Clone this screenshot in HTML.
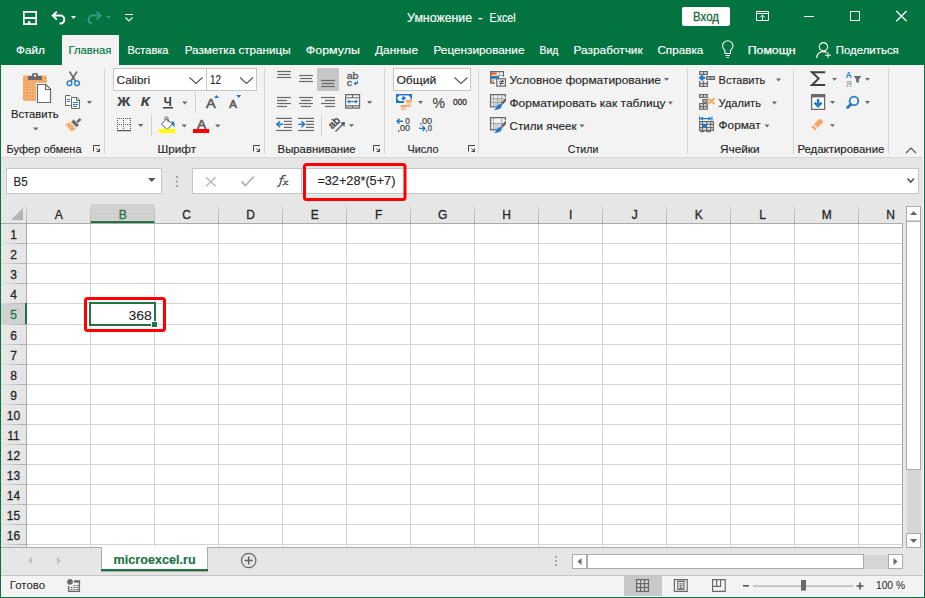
<!DOCTYPE html>
<html><head><meta charset="utf-8"><style>
html,body{margin:0;padding:0;background:#F3F3F3;}
svg{display:block;font-family:"Liberation Sans",sans-serif;}
</style></head><body>
<svg width="925" height="598" viewBox="0 0 925 598">
<rect x="0" y="0" width="925" height="65" fill="#03733F" />
<rect x="0" y="65" width="925" height="92" fill="#F3F3F3" />
<rect x="0" y="157" width="925" height="1" fill="#D6D6D6" />
<rect x="0" y="158" width="925" height="46" fill="#E6E6E6" />
<text x="407.1" y="22" font-size="12" fill="#FFFFFF" font-weight="normal" text-anchor="start" textLength="65" lengthAdjust="spacingAndGlyphs" stroke="#FFFFFF" stroke-width="0.15" >Умножение</text>
<text x="477.9" y="22" font-size="12" fill="#FFFFFF" font-weight="normal" text-anchor="start" textLength="4.6" lengthAdjust="spacingAndGlyphs" stroke="#FFFFFF" stroke-width="0.15" >-</text>
<text x="489.6" y="22" font-size="12" fill="#FFFFFF" font-weight="normal" text-anchor="start" textLength="26" lengthAdjust="spacingAndGlyphs" stroke="#FFFFFF" stroke-width="0.15" >Excel</text>
<rect x="682" y="7" width="48" height="19" rx="2" fill="#FFFFFF"/>
<text x="706" y="21" font-size="12" fill="#1D6B3F" font-weight="normal" text-anchor="middle" textLength="26" lengthAdjust="spacingAndGlyphs" stroke="#1D6B3F" stroke-width="0.3" >Вход</text>
<path fill="#FFFFFF" fill-rule="evenodd" d="M23 11H37V25H23Z M24.7 12.7H35.3V17H24.7Z M24.7 19H35.3V23.3H24.7Z M28 21.3H30.3V23.3H28Z"/>
<path fill="none" stroke="#FFFFFF" stroke-width="2" d="M56.8 11.6L52.8 15.6L56.8 19.6 M53.2 15.6H60.3A4 4 0 0 1 60.3 23.6H59.5"/>
<path fill="#FFFFFF" d="M71 16H76L73.5 19Z"/>
<path fill="none" stroke="#2E9E7C" stroke-width="2" d="M96.6 11.6L100.6 15.6L96.6 19.6 M100.2 15.6H92.6A4 4 0 0 0 88.6 19.6A4 4 0 0 0 92.2 23.6"/>
<path fill="#2E9A78" d="M106 16H111L108.5 19Z"/>
<path fill="none" stroke="#FFFFFF" stroke-width="1.2" d="M125 14.5H133 M125.5 17.5L129 21L132.5 17.5"/>
<path fill="none" stroke="#FFFFFF" stroke-width="1" d="M756.5 11.5H768.5V20.5H756.5Z M756.5 13.5H768.5 M762.5 20V15 M760 17.5L762.5 15L765 17.5"/>
<path fill="none" stroke="#FFFFFF" stroke-width="1" d="M804 16.5H814"/>
<path fill="none" stroke="#FFFFFF" stroke-width="1" d="M850.5 11.5H859.5V20.5H850.5Z"/>
<path fill="none" stroke="#FFFFFF" stroke-width="1.3" d="M896.3 11L906.6 21.3 M906.6 11L896.3 21.3"/>
<path fill="none" stroke="#FFFFFF" stroke-width="1.1" d="M725 53.5V50.5C723.5 49 722.5 47.5 722.5 46A5.2 5.2 0 0 1 733 46C733 47.5 732 49 730.5 50.5V53.5Z M725.5 55.5H730 M726.5 57.5H729"/>
<path fill="none" stroke="#FFFFFF" stroke-width="1.1" d="M823.5 42.6A4.2 4.2 0 1 1 823.4 42.6Z M816.6 58C817 53.8 819.6 51.6 823.5 51.6C824.8 51.6 825.8 51.9 826.8 52.4"/>
<path fill="none" stroke="#FFFFFF" stroke-width="1" d="M828 52.2V58.2 M825 55.2H831"/>
<rect x="62" y="35" width="57" height="30" fill="#F3F3F3" />
<text x="16" y="54" font-size="11.6" fill="#FFFFFF" font-weight="normal" text-anchor="start" textLength="29" lengthAdjust="spacingAndGlyphs" stroke="#FFFFFF" stroke-width="0.15" >Файл</text>
<text x="68.5" y="54" font-size="11.6" fill="#03733F" font-weight="normal" text-anchor="start" textLength="43" lengthAdjust="spacingAndGlyphs" stroke="#03733F" stroke-width="0.15" >Главная</text>
<text x="127.5" y="54" font-size="11.6" fill="#FFFFFF" font-weight="normal" text-anchor="start" textLength="41" lengthAdjust="spacingAndGlyphs" stroke="#FFFFFF" stroke-width="0.15" >Вставка</text>
<text x="184.7" y="54" font-size="11.6" fill="#FFFFFF" font-weight="normal" text-anchor="start" textLength="106" lengthAdjust="spacingAndGlyphs" stroke="#FFFFFF" stroke-width="0.15" >Разметка страницы</text>
<text x="305.8" y="54" font-size="11.6" fill="#FFFFFF" font-weight="normal" text-anchor="start" textLength="54" lengthAdjust="spacingAndGlyphs" stroke="#FFFFFF" stroke-width="0.15" >Формулы</text>
<text x="375" y="54" font-size="11.6" fill="#FFFFFF" font-weight="normal" text-anchor="start" textLength="43" lengthAdjust="spacingAndGlyphs" stroke="#FFFFFF" stroke-width="0.15" >Данные</text>
<text x="433.5" y="54" font-size="11.6" fill="#FFFFFF" font-weight="normal" text-anchor="start" textLength="91" lengthAdjust="spacingAndGlyphs" stroke="#FFFFFF" stroke-width="0.15" >Рецензирование</text>
<text x="539.5" y="54" font-size="11.6" fill="#FFFFFF" font-weight="normal" text-anchor="start" textLength="19" lengthAdjust="spacingAndGlyphs" stroke="#FFFFFF" stroke-width="0.15" >Вид</text>
<text x="573.6" y="54" font-size="11.6" fill="#FFFFFF" font-weight="normal" text-anchor="start" textLength="69" lengthAdjust="spacingAndGlyphs" stroke="#FFFFFF" stroke-width="0.15" >Разработчик</text>
<text x="657.4" y="54" font-size="11.6" fill="#FFFFFF" font-weight="normal" text-anchor="start" textLength="46" lengthAdjust="spacingAndGlyphs" stroke="#FFFFFF" stroke-width="0.15" >Справка</text>
<text x="747.7" y="54" font-size="11.6" fill="#FFFFFF" font-weight="normal" text-anchor="start" textLength="48" lengthAdjust="spacingAndGlyphs" stroke="#FFFFFF" stroke-width="0.25" >Помощн</text>
<text x="835.8" y="54" font-size="11.6" fill="#FFFFFF" font-weight="normal" text-anchor="start" textLength="63" lengthAdjust="spacingAndGlyphs" stroke="#FFFFFF" stroke-width="0.15" >Поделиться</text>
<rect x="104" y="69" width="1" height="85" fill="#D5D5D5" />
<rect x="264" y="69" width="1" height="85" fill="#D5D5D5" />
<rect x="384" y="69" width="1" height="85" fill="#D5D5D5" />
<rect x="478" y="69" width="1" height="85" fill="#D5D5D5" />
<rect x="687" y="69" width="1" height="85" fill="#D5D5D5" />
<rect x="793" y="69" width="1" height="85" fill="#D5D5D5" />
<rect x="888" y="69" width="1" height="85" fill="#D5D5D5" />
<text x="6.6" y="153" font-size="11.6" fill="#262626" font-weight="normal" text-anchor="start" textLength="75" lengthAdjust="spacingAndGlyphs" stroke="#262626" stroke-width="0.15" >Буфер обмена</text>
<text x="157.6" y="153" font-size="11.6" fill="#262626" font-weight="normal" text-anchor="start" textLength="38.5" lengthAdjust="spacingAndGlyphs" stroke="#262626" stroke-width="0.15" >Шрифт</text>
<text x="277.6" y="153" font-size="11.6" fill="#262626" font-weight="normal" text-anchor="start" textLength="78" lengthAdjust="spacingAndGlyphs" stroke="#262626" stroke-width="0.15" >Выравнивание</text>
<text x="407.5" y="153" font-size="11.6" fill="#262626" font-weight="normal" text-anchor="start" textLength="31" lengthAdjust="spacingAndGlyphs" stroke="#262626" stroke-width="0.15" >Число</text>
<text x="567.8" y="153" font-size="11.6" fill="#262626" font-weight="normal" text-anchor="start" textLength="30.5" lengthAdjust="spacingAndGlyphs" stroke="#262626" stroke-width="0.15" >Стили</text>
<text x="720" y="153" font-size="11.6" fill="#262626" font-weight="normal" text-anchor="start" textLength="39.5" lengthAdjust="spacingAndGlyphs" stroke="#262626" stroke-width="0.15" >Ячейки</text>
<text x="797.4" y="153" font-size="11.6" fill="#262626" font-weight="normal" text-anchor="start" textLength="87" lengthAdjust="spacingAndGlyphs" stroke="#262626" stroke-width="0.15" >Редактирование</text>
<defs><pattern id="dots" width="3" height="3" patternUnits="userSpaceOnUse"><rect width="3" height="3" fill="#F3A965"/><rect x="1" y="1" width="1" height="1" fill="#F9D4A8"/></pattern><pattern id="hdots" width="4" height="4" patternUnits="userSpaceOnUse"><rect width="4" height="4" fill="#D2D2D2"/><rect x="1" y="1" width="1" height="1" fill="#C4C4C4"/></pattern><linearGradient id="vgrad" x1="0" y1="0" x2="0" y2="1"><stop offset="0" stop-color="#E0E0E0"/><stop offset="1" stop-color="#A8A8A8"/></linearGradient><linearGradient id="hgrad" x1="0" y1="0" x2="1" y2="0"><stop offset="0" stop-color="#E0E0E0"/><stop offset="1" stop-color="#ABABAB"/></linearGradient><pattern id="trk" width="2" height="2" patternUnits="userSpaceOnUse"><rect width="2" height="2" fill="#DCDCDC"/><rect x="0" y="0" width="1" height="1" fill="#D0D0D0"/><rect x="1" y="1" width="1" height="1" fill="#D0D0D0"/></pattern></defs>
<rect x="23" y="75.5" width="24" height="25.5" rx="1.5" fill="url(#dots)"/>
<path fill="#6A6A6A" d="M28 76H42V80H28Z M32 76V74.5Q32 73 33.5 73H36.5Q38 73 38 74.5V76Z"/>
<rect x="34" y="74.5" width="2" height="2" fill="#F3F3F3"/>
<path fill="#FFFFFF" stroke="#F3F3F3" stroke-width="3" d="M37.5 84.5H46L50.5 89V102.5H37.5Z"/>
<path fill="#FFFFFF" stroke="#6A6A6A" stroke-width="1.2" d="M37.5 84.5H46L50.5 89V102.5H37.5Z M45.5 84.5V89.5H50.5"/>
<text x="11" y="117.7" font-size="11.6" fill="#262626" font-weight="normal" text-anchor="start" textLength="47.5" lengthAdjust="spacingAndGlyphs" stroke="#262626" stroke-width="0.15" >Вставить</text>
<path fill="#6A6A6A" d="M33 127.5H38.5L35.75 130.5Z"/>
<path fill="none" stroke="#6A6A6A" stroke-width="1.6" d="M69.5 71.5L75.5 81 M77 71.5L71 81"/>
<circle cx="69.5" cy="83.2" r="2.4" fill="none" stroke="#1F7AC8" stroke-width="1.3"/>
<circle cx="77" cy="83.2" r="2.4" fill="none" stroke="#1F7AC8" stroke-width="1.3"/>
<path fill="#FFFFFF" stroke="#6A6A6A" stroke-width="1" d="M65.5 95.5H70L72 97.5V105.5H65.5Z"/>
<path fill="none" stroke="#1F7AC8" stroke-width="1" d="M67 99.5H70 M67 101.5H70"/>
<path fill="#FFFFFF" stroke="#F3F3F3" stroke-width="2" d="M71.5 97.5H77L79.5 100V108.5H71.5Z"/>
<path fill="#FFFFFF" stroke="#6A6A6A" stroke-width="1" d="M71.5 97.5H77L79.5 100V108.5H71.5Z M76.5 97.5V100.5H79.5"/>
<path fill="none" stroke="#1F7AC8" stroke-width="1" d="M73 102.5H78 M73 104.5H78 M73 106.5H77"/>
<path fill="#6A6A6A" d="M87 101H92L89.5 104Z"/>
<path fill="#6A6A6A" d="M76.3 121.2L79.6 117.9L81.4 119.7L78.1 123Z"/>
<path fill="#6A6A6A" d="M71.2 121.9L73.6 119.5L79 124.9L76.6 127.3Z"/>
<path fill="url(#dots)" d="M65.3 124.3L69.7 122.3L75.9 128.5L71.8 131.8Z"/>
<path fill="none" stroke="#444" stroke-width="1" d="M93.5 151.5V145.5H100 M96.5 148.5L99.5 151.5 M96.5 151.5H99.5V148.5"/>
<rect x="113" y="68" width="144" height="23" fill="#C6C6C6" />
<rect x="114" y="69" width="92" height="21" fill="#FFFFFF" />
<rect x="207" y="69" width="49" height="21" fill="#FFFFFF" />
<text x="116.6" y="84" font-size="11.6" fill="#262626" font-weight="normal" text-anchor="start" textLength="33.5" lengthAdjust="spacingAndGlyphs" stroke="#262626" stroke-width="0.15" >Calibri</text>
<text x="210" y="84" font-size="12" fill="#262626" font-weight="normal" text-anchor="start" textLength="11" lengthAdjust="spacingAndGlyphs" stroke="#262626" stroke-width="0.15" >12</text>
<path fill="none" stroke="#555" stroke-width="1.1" d="M189.5 77.5L196 83.5L202.5 77.5 M240 77.5L246.5 83.5L253 77.5"/>
<text x="117.3" y="106.2" font-size="13.5" fill="#404040" font-weight="bold" text-anchor="start" textLength="13" lengthAdjust="spacingAndGlyphs" stroke="#404040" stroke-width="0.15" >Ж</text>
<text x="140.8" y="106.2" font-size="13" fill="#404040" font-weight="bold" text-anchor="start" textLength="9" lengthAdjust="spacingAndGlyphs" stroke="#404040" stroke-width="0.15" font-style="italic">К</text>
<text x="163.8" y="106.2" font-size="12.5" fill="#404040" font-weight="bold" text-anchor="start" textLength="8" lengthAdjust="spacingAndGlyphs" stroke="#404040" stroke-width="0.15" >Ч</text>
<rect x="163" y="107" width="10" height="1.5" fill="#404040" />
<path fill="#6A6A6A" d="M182 101.5H187.5L184.75 104.5Z"/>
<rect x="195" y="92" width="1" height="21" fill="#D0D0D0" />
<text x="206" y="108" font-size="13.5" fill="#5A5A5A" font-weight="normal" text-anchor="start" textLength="9.7" lengthAdjust="spacingAndGlyphs" stroke="#5A5A5A" stroke-width="0.6" >A</text>
<path fill="#1F7AC8" d="M214 98H219.2L216.6 95Z M236.2 95H241.2L238.7 98Z"/>
<text x="229.2" y="108" font-size="10.5" fill="#5A5A5A" font-weight="normal" text-anchor="start" textLength="7.6" lengthAdjust="spacingAndGlyphs" stroke="#5A5A5A" stroke-width="0.6" >A</text>
<path fill="none" stroke="#555" stroke-width="1" stroke-dasharray="1 1" d="M117 118.5H131 M117 124.5H131 M117.5 118V130 M123.5 118V130 M130.5 118V130"/>
<rect x="117" y="130" width="14" height="1.2" fill="#555" />
<path fill="#6A6A6A" d="M138 124H143.5L140.75 127Z"/>
<rect x="151" y="115" width="1" height="21" fill="#D0D0D0" />
<path fill="#FFFFFF" stroke="#555" stroke-width="1" d="M161.5 124L166.5 119L172.5 124L167 129.5Z M165 120V118Q165 117 166.5 117Q168 117 168 118V122"/>
<path fill="#1F7AC8" d="M172 121Q175.5 122 174.5 127Q173 126 172 124Z"/>
<rect x="158.8" y="129" width="16.4" height="4" fill="#FFFF00" />
<path fill="#6A6A6A" d="M181.5 124.5H187.0L184.25 127.5Z"/>
<text x="197" y="129" font-size="13.5" fill="#5A5A5A" font-weight="normal" text-anchor="start" textLength="9.2" lengthAdjust="spacingAndGlyphs" stroke="#5A5A5A" stroke-width="0.6" >A</text>
<rect x="193" y="129" width="16.2" height="4" fill="#FF0000" />
<path fill="#6A6A6A" d="M215 124.5H220.5L217.75 127.5Z"/>
<path fill="none" stroke="#444" stroke-width="1" d="M253.5 151.5V145.5H260 M256.5 148.5L259.5 151.5 M256.5 151.5H259.5V148.5"/>
<rect x="277" y="70.9" width="14" height="1.2" fill="#6A6A6A" />
<rect x="278" y="73.9" width="12" height="1.2" fill="#6A6A6A" />
<rect x="277" y="76.9" width="14" height="1.2" fill="#6A6A6A" />
<rect x="299" y="74.9" width="14" height="1.2" fill="#6A6A6A" />
<rect x="300" y="77.9" width="12" height="1.2" fill="#6A6A6A" />
<rect x="299" y="80.9" width="14" height="1.2" fill="#6A6A6A" />
<rect x="317" y="68" width="22" height="23" fill="#C6C6C6" />
<rect x="321" y="79.9" width="14" height="1.2" fill="#6A6A6A" />
<rect x="322" y="82.9" width="12" height="1.2" fill="#6A6A6A" />
<rect x="321" y="85.9" width="14" height="1.2" fill="#6A6A6A" />
<rect x="277" y="96.9" width="14" height="1.2" fill="#6A6A6A" />
<rect x="277" y="99.9" width="10" height="1.2" fill="#6A6A6A" />
<rect x="277" y="102.9" width="14" height="1.2" fill="#6A6A6A" />
<rect x="277" y="105.9" width="10" height="1.2" fill="#6A6A6A" />
<rect x="299" y="96.9" width="14" height="1.2" fill="#6A6A6A" />
<rect x="301" y="99.9" width="10" height="1.2" fill="#6A6A6A" />
<rect x="299" y="102.9" width="14" height="1.2" fill="#6A6A6A" />
<rect x="301" y="105.9" width="10" height="1.2" fill="#6A6A6A" />
<rect x="321" y="96.9" width="14" height="1.2" fill="#6A6A6A" />
<rect x="325" y="99.9" width="10" height="1.2" fill="#6A6A6A" />
<rect x="321" y="102.9" width="14" height="1.2" fill="#6A6A6A" />
<rect x="325" y="105.9" width="10" height="1.2" fill="#6A6A6A" />
<text x="346.7" y="78.6" font-size="9.5" fill="#555" font-weight="normal" text-anchor="start" textLength="11.8" lengthAdjust="spacingAndGlyphs" stroke="#555" stroke-width="0.3" >ab</text>
<text x="346.8" y="85.7" font-size="9.5" fill="#555" font-weight="normal" text-anchor="start" textLength="5.3" lengthAdjust="spacingAndGlyphs" stroke="#555" stroke-width="0.3" >c</text>
<path fill="none" stroke="#1F7AC8" stroke-width="1.1" d="M357.5 81V83.5H354.5 M356 82L354.5 83.5L356 85"/>
<path fill="none" stroke="#6A6A6A" stroke-width="1.15" d="M345.6 94.65H359.6V108.1H345.6Z M345.6 97.7H359.6 M345.6 105.8H359.6 M352.5 94.6V97.7 M352.5 105.8V108.1"/>
<path fill="none" stroke="#1F7AC8" stroke-width="1.1" d="M348 101.6H357"/>
<path fill="#1F7AC8" d="M347 101.6L349.6 99.4V103.8Z M358 101.6L355.4 99.4V103.8Z"/>
<path fill="#6A6A6A" d="M367 101H372.2L369.6 104Z"/>
<rect x="276" y="117.8" width="16" height="1.2" fill="#6A6A6A" />
<rect x="284" y="120.8" width="8" height="1.2" fill="#6A6A6A" />
<rect x="284" y="123.8" width="8" height="1.2" fill="#6A6A6A" />
<rect x="284" y="126.8" width="8" height="1.2" fill="#6A6A6A" />
<rect x="276" y="129.9" width="16" height="1.2" fill="#6A6A6A" />
<path fill="none" stroke="#1F7AC8" stroke-width="1.6" d="M277 124.3H283 M280 121.3L277 124.3L280 127.3"/>
<rect x="298" y="117.8" width="16" height="1.2" fill="#6A6A6A" />
<rect x="306" y="120.8" width="8" height="1.2" fill="#6A6A6A" />
<rect x="306" y="123.8" width="8" height="1.2" fill="#6A6A6A" />
<rect x="306" y="126.8" width="8" height="1.2" fill="#6A6A6A" />
<rect x="298" y="129.9" width="16" height="1.2" fill="#6A6A6A" />
<path fill="none" stroke="#1F7AC8" stroke-width="1.6" d="M298.5 124.3H304.5 M301.5 121.3L304.5 124.3L301.5 127.3"/>
<rect x="321" y="115" width="1" height="21" fill="#D0D0D0" />
<text x="0" y="0" font-size="10.5" fill="#444" font-weight="normal" text-anchor="start" textLength="12" lengthAdjust="spacingAndGlyphs" stroke="#444" stroke-width="0.45" transform="translate(332.3 129.6) rotate(-45)">ab</text>
<path fill="none" stroke="#555" stroke-width="1.3" d="M335.5 131.5L344 123"/>
<path fill="#555" d="M345 122L340.3 122.6L344.4 126.7Z"/>
<path fill="#6A6A6A" d="M349 124.3H354L351.5 127.0Z"/>
<path fill="none" stroke="#444" stroke-width="1" d="M373.5 151.5V145.5H380 M376.5 148.5L379.5 151.5 M376.5 151.5H379.5V148.5"/>
<rect x="393" y="68" width="78" height="23" fill="#C6C6C6" />
<rect x="394" y="69" width="76" height="21" fill="#FFFFFF" />
<text x="396.4" y="83.6" font-size="11.6" fill="#262626" font-weight="normal" text-anchor="start" textLength="40" lengthAdjust="spacingAndGlyphs" stroke="#262626" stroke-width="0.15" >Общий</text>
<path fill="none" stroke="#555" stroke-width="1.1" d="M454.5 77.5L461 83.5L467.5 77.5"/>
<rect x="396" y="94" width="16" height="9" fill="#1F7AC8"/>
<path fill="#FFFFFF" d="M399 95.5H409A1.5 1.5 0 0 0 410.5 97V99.5A1.5 1.5 0 0 0 409 101H399A1.5 1.5 0 0 0 397.5 99.5V97A1.5 1.5 0 0 0 399 95.5Z"/>
<circle cx="403.7" cy="98.3" r="2" fill="#1F7AC8"/>
<rect x="404" y="99.5" width="9" height="11" fill="#F3F3F3"/>
<rect x="399" y="104" width="6" height="7" fill="#F3F3F3"/>
<path fill="#F3A965" d="M406 100H411.5Q412.5 101.25 411.5 102.5H406Q405 101.25 406 100Z M406.5 103.6H411V104.8H406.5Z M406.5 105.8H411V107H406.5Z M401 105H406.5Q407.5 106.25 406.5 107.5H401Q400 106.25 401 105Z M401.5 108.6H406V109.8H401.5Z"/>
<path fill="#6A6A6A" d="M418 101H423L420.5 104Z"/>
<text x="432.5" y="108" font-size="14.5" fill="#444" font-weight="normal" text-anchor="start" textLength="12.5" lengthAdjust="spacingAndGlyphs" stroke="#444" stroke-width="0.15" >%</text>
<text x="453" y="105" font-size="9.5" fill="#333" font-weight="normal" text-anchor="start" textLength="14" lengthAdjust="spacingAndGlyphs" stroke="#333" stroke-width="0.35" >000</text>
<path fill="none" stroke="#1F7AC8" stroke-width="1.4" d="M397 121.3H403 M399.5 118.8L397 121.3L399.5 123.8 M419 128.4H425 M422.5 125.9L425 128.4L422.5 130.9"/>
<text x="405.3" y="123.5" font-size="8.5" fill="#333" font-weight="normal" text-anchor="start" textLength="4.6" lengthAdjust="spacingAndGlyphs" stroke="#333" stroke-width="0.15" >0</text>
<text x="397.5" y="130.5" font-size="8.5" fill="#333" font-weight="normal" text-anchor="start" textLength="12.5" lengthAdjust="spacingAndGlyphs" stroke="#333" stroke-width="0.15" >,00</text>
<text x="419.5" y="123.5" font-size="8.5" fill="#333" font-weight="normal" text-anchor="start" textLength="12.5" lengthAdjust="spacingAndGlyphs" stroke="#333" stroke-width="0.15" >,00</text>
<text x="425.5" y="130.5" font-size="8.5" fill="#333" font-weight="normal" text-anchor="start" textLength="6.5" lengthAdjust="spacingAndGlyphs" stroke="#333" stroke-width="0.15" >,0</text>
<path fill="none" stroke="#444" stroke-width="1" d="M468.5 151.5V145.5H475 M471.5 148.5L474.5 151.5 M471.5 151.5H474.5V148.5"/>
<rect x="491" y="72" width="12.3" height="11.2" fill="#FFFFFF" />
<rect x="490.9" y="72" width="6.1" height="3.5" fill="#F3A965" />
<rect x="492" y="73" width="1.2" height="1.2" fill="#FF0000" />
<rect x="494" y="73" width="1.2" height="1.2" fill="#FF0000" />
<rect x="491" y="76" width="8.2" height="2.6" fill="#1F7AC8" />
<rect x="491" y="78.5" width="5" height="0.8" fill="#1F7AC8" />
<rect x="491" y="79.5" width="3" height="3.5" fill="#F3A965" />
<path fill="none" stroke="#A8A8A8" stroke-width="1" d="M499.5 72V75.5 M497 75.5H503.5"/>
<path fill="none" stroke="#6A6A6A" stroke-width="1.3" d="M490.7 83.4V71.7H503.4V76.8 M490.7 83.1H495"/>
<rect x="496.8" y="78.8" width="8.6" height="7.3" fill="#FFFFFF" stroke="#6A6A6A" stroke-width="1.3"/>
<path fill="none" stroke="#333" stroke-width="0.9" d="M499.2 81.3H504 M499.2 83.3H504 M502.8 80L500.4 84.8"/>
<rect x="494" y="99" width="7.6" height="8" fill="#D4D4D4"/>
<path fill="none" stroke="#A8A8A8" stroke-width="1" d="M493.6 95V106.5 M497.7 95V106.5 M501.7 95V106.5 M491 98.6H504 M491 102.5H504"/>
<path fill="none" stroke="#F3F3F3" stroke-width="1.5" d="M498 107.6H506 M506 96V107"/>
<path fill="none" stroke="#6A6A6A" stroke-width="1.3" d="M490.6 107.4V94.6H505.4V97 M490.6 106.9H497"/>
<path fill="#F3F3F3" d="M507 96L507 102L502 108L499 105Z"/>
<path fill="#6A6A6A" d="M506 97.2L506 101.2L502.4 104.8L500.6 103Z"/>
<path fill="#1F7AC8" d="M501.9 104Q502.2 107.5 499.2 109Q497 110 494 110Q496.8 107.8 497.4 105.6Q499 103.5 501.9 104Z"/>
<rect x="494" y="124" width="7.6" height="5.5" fill="#D4D4D4"/>
<path fill="none" stroke="#A8A8A8" stroke-width="1" d="M493.6 118V129.5 M501.7 118V129.5 M491 123.5H504 M491 129.4H504"/>
<path fill="none" stroke="#F3F3F3" stroke-width="1.5" d="M498 130.6H506 M506 119V130"/>
<path fill="none" stroke="#6A6A6A" stroke-width="1.3" d="M490.6 130.4V117.6H505.4V120 M490.6 129.9H497"/>
<path fill="#F3F3F3" d="M507 119L507 125L502 131L499 128Z"/>
<path fill="#6A6A6A" d="M506 120.2L506 124.2L502.4 127.8L500.6 126Z"/>
<path fill="#1F7AC8" d="M501.9 127Q502.2 130.5 499.2 132Q497 133 494 133Q496.8 130.8 497.4 128.6Q499 126.5 501.9 127Z"/>
<text x="509.5" y="84.2" font-size="11.6" fill="#262626" font-weight="normal" text-anchor="start" textLength="151.5" lengthAdjust="spacingAndGlyphs" stroke="#262626" stroke-width="0.15" >Условное форматирование</text>
<text x="509.5" y="107.2" font-size="11.6" fill="#262626" font-weight="normal" text-anchor="start" textLength="156" lengthAdjust="spacingAndGlyphs" stroke="#262626" stroke-width="0.15" >Форматировать как таблицу</text>
<text x="509.5" y="129.8" font-size="11.6" fill="#262626" font-weight="normal" text-anchor="start" textLength="67" lengthAdjust="spacingAndGlyphs" stroke="#262626" stroke-width="0.15" >Стили ячеек</text>
<path fill="#6A6A6A" d="M664 78H669L666.5 81Z"/>
<path fill="#6A6A6A" d="M668 101.5H673L670.5 104.5Z"/>
<path fill="#6A6A6A" d="M579.5 124.5H584.5L582.0 127.5Z"/>
<path fill="none" stroke="#6A6A6A" stroke-width="1.3" d="M699.7 71.7H707.4V74.3H699.7Z M703.5 71.7V74.3 M699.7 80.8V86.4H707.4V80.8 M699.7 83.6H707.4 M703.5 80.8V86.4"/>
<path fill="#D0D0D0" stroke="#6A6A6A" stroke-width="1.3" d="M706.7 76.7H714.4V79.3H706.7Z M710.5 76.7V79.3"/>
<path fill="none" stroke="#F3F3F3" stroke-width="1" d="M699 80L704 80"/>
<path fill="none" stroke="#1F7AC8" stroke-width="2.2" d="M700.2 77.8H705.2 M702.9 75.4L700.2 77.8L702.9 80.2"/>
<text x="718.6" y="83.6" font-size="11.6" fill="#262626" font-weight="normal" text-anchor="start" textLength="46.7" lengthAdjust="spacingAndGlyphs" stroke="#262626" stroke-width="0.15" >Вставить</text>
<path fill="#6A6A6A" d="M776 78.5H781L778.5 81.5Z"/>
<path fill="none" stroke="#6A6A6A" stroke-width="1.3" d="M699.7 94.7H707.2V97.4H699.7Z M703.4 94.7V97.4 M699.7 103.7H707.2V109.2H699.7Z M699.7 106.5H707.2 M703.4 103.7V109.2"/>
<path fill="#D0D0D0" stroke="#6A6A6A" stroke-width="1.3" d="M702.9 99.6H707V102.1H702.9Z"/>
<path fill="none" stroke="#F3A965" stroke-width="1.9" d="M707.8 98.2L714.4 104 M714.4 98.2L707.8 104"/>
<text x="718.6" y="106.6" font-size="11.6" fill="#262626" font-weight="normal" text-anchor="start" textLength="42.4" lengthAdjust="spacingAndGlyphs" stroke="#262626" stroke-width="0.15" >Удалить</text>
<path fill="#6A6A6A" d="M772 101.5H777L774.5 104.5Z"/>
<path fill="none" stroke="#1F7AC8" stroke-width="1.2" d="M700.5 118.6H711 M699.6 116.6V120.6 M711.9 116.6V120.6"/>
<path fill="#1F7AC8" d="M700.3 118.6L703 116.4V120.8Z M711.2 118.6L708.5 116.4V120.8Z"/>
<path fill="#FFFFFF" stroke="#6A6A6A" stroke-width="1.2" d="M699.6 121.6H713.4V130.4H699.6Z M699.6 124.4H713.4 M699.6 127.6H713.4 M702.4 121.6V130.4 M706.7 121.6V130.4 M710.6 121.6V130.4"/>
<path fill="none" stroke="#6A6A6A" stroke-width="1.2" d="M700.3 131.6H704.5 M706 131.6H710.8"/>
<rect x="702.3" y="124.1" width="4.5" height="3.7" fill="#1F7AC8" />
<text x="718.6" y="129.2" font-size="11.6" fill="#262626" font-weight="normal" text-anchor="start" textLength="42" lengthAdjust="spacingAndGlyphs" stroke="#262626" stroke-width="0.15" >Формат</text>
<path fill="#6A6A6A" d="M764.5 124.5H769.5L767.0 127.5Z"/>
<path fill="none" stroke="#404040" stroke-width="2" stroke-linejoin="miter" d="M825.2 72.2H812L818.6 78.6L812 85H825.2"/>
<path fill="#6A6A6A" d="M832 78H837L834.5 80.8Z"/>
<text x="845.8" y="77.8" font-size="9.5" fill="#1F7AC8" font-weight="bold" text-anchor="start" textLength="6" lengthAdjust="spacingAndGlyphs" >А</text>
<text x="846" y="86.5" font-size="8.5" fill="#A8A8A8" font-weight="bold" text-anchor="start" textLength="5.8" lengthAdjust="spacingAndGlyphs" >Я</text>
<path fill="#6A6A6A" d="M853.8 76H861.3L858.9 79.6V82.6H856.2V79.6Z"/>
<path fill="#6A6A6A" d="M865 78H870L867.5 80.8Z"/>
<path fill="#FFFFFF" stroke="#6A6A6A" stroke-width="1.3" d="M811.6 94.6H824.6V109.3H811.6Z"/>
<rect x="811" y="94" width="14.2" height="3.4" fill="#6A6A6A" />
<path fill="none" stroke="#1F7AC8" stroke-width="2.4" d="M818.1 99V106 M814.6 102.6L818.1 106.3L821.6 102.6"/>
<path fill="#6A6A6A" d="M830 101H835L832.5 104Z"/>
<circle cx="854" cy="100.9" r="4.3" fill="none" stroke="#1F7AC8" stroke-width="1.8"/>
<path fill="none" stroke="#1F7AC8" stroke-width="2.8" stroke-linecap="round" d="M850.7 104.4L847.6 107.5"/>
<path fill="#6A6A6A" d="M865 101H870L867.5 104Z"/>
<path fill="#F3A965" d="M814 124.2L819.7 118.4L823.7 121.8L817.8 127.7Z"/>
<path fill="#F3A965" d="M811.3 127L813 125.2L816.8 128.8L815 130.5Z"/>
<path fill="#6A6A6A" d="M830 124.3H835L832.5 127.1Z"/>
<path fill="none" stroke="#555" stroke-width="1.1" d="M906 153L911 148L916 153"/>
<rect x="6" y="168" width="156" height="26" fill="#C6C6C6" />
<rect x="7" y="169" width="154" height="24" fill="#FFFFFF" />
<text x="13.6" y="186" font-size="12" fill="#262626" font-weight="normal" text-anchor="start" textLength="14" lengthAdjust="spacingAndGlyphs" stroke="#262626" stroke-width="0.15" >B5</text>
<rect x="192" y="168" width="727" height="26" fill="#C6C6C6" />
<rect x="193" y="169" width="725" height="24" fill="#FFFFFF" />
<rect x="301" y="168" width="1" height="26" fill="#C6C6C6" />
<text x="317.4" y="185" font-size="12.5" fill="#262626" font-weight="normal" text-anchor="start" textLength="78" lengthAdjust="spacingAndGlyphs" stroke="#262626" stroke-width="0.15" >=32+28*(5+7)</text>
<rect x="0" y="204" width="903" height="19" fill="#E6E6E6" />
<rect x="91" y="204" width="63" height="19" fill="url(#hdots)" />
<rect x="0" y="223" width="903" height="1" fill="#ABABAB" />
<rect x="91" y="221" width="64" height="2" fill="#217346" />
<rect x="27" y="224" width="876" height="323" fill="#FFFFFF" />
<rect x="1" y="224" width="25" height="323" fill="#E6E6E6" />
<rect x="1" y="303" width="25" height="21" fill="url(#hdots)" />
<rect x="26" y="204" width="1" height="19" fill="url(#vgrad)" />
<rect x="90" y="204" width="1" height="19" fill="url(#vgrad)" />
<rect x="90" y="224" width="1" height="323" fill="#D4D4D4" />
<rect x="154" y="204" width="1" height="19" fill="url(#vgrad)" />
<rect x="154" y="224" width="1" height="323" fill="#D4D4D4" />
<rect x="218" y="204" width="1" height="19" fill="url(#vgrad)" />
<rect x="218" y="224" width="1" height="323" fill="#D4D4D4" />
<rect x="282" y="204" width="1" height="19" fill="url(#vgrad)" />
<rect x="282" y="224" width="1" height="323" fill="#D4D4D4" />
<rect x="346" y="204" width="1" height="19" fill="url(#vgrad)" />
<rect x="346" y="224" width="1" height="323" fill="#D4D4D4" />
<rect x="410" y="204" width="1" height="19" fill="url(#vgrad)" />
<rect x="410" y="224" width="1" height="323" fill="#D4D4D4" />
<rect x="474" y="204" width="1" height="19" fill="url(#vgrad)" />
<rect x="474" y="224" width="1" height="323" fill="#D4D4D4" />
<rect x="538" y="204" width="1" height="19" fill="url(#vgrad)" />
<rect x="538" y="224" width="1" height="323" fill="#D4D4D4" />
<rect x="602" y="204" width="1" height="19" fill="url(#vgrad)" />
<rect x="602" y="224" width="1" height="323" fill="#D4D4D4" />
<rect x="666" y="204" width="1" height="19" fill="url(#vgrad)" />
<rect x="666" y="224" width="1" height="323" fill="#D4D4D4" />
<rect x="730" y="204" width="1" height="19" fill="url(#vgrad)" />
<rect x="730" y="224" width="1" height="323" fill="#D4D4D4" />
<rect x="794" y="204" width="1" height="19" fill="url(#vgrad)" />
<rect x="794" y="224" width="1" height="323" fill="#D4D4D4" />
<rect x="858" y="204" width="1" height="19" fill="url(#vgrad)" />
<rect x="858" y="224" width="1" height="323" fill="#D4D4D4" />
<rect x="26" y="224" width="1" height="323" fill="#ABABAB" />
<rect x="27" y="243" width="876" height="1" fill="#D4D4D4" />
<rect x="1" y="243" width="25" height="1" fill="url(#hgrad)" />
<rect x="27" y="263" width="876" height="1" fill="#D4D4D4" />
<rect x="1" y="263" width="25" height="1" fill="url(#hgrad)" />
<rect x="27" y="283" width="876" height="1" fill="#D4D4D4" />
<rect x="1" y="283" width="25" height="1" fill="url(#hgrad)" />
<rect x="27" y="303" width="876" height="1" fill="#D4D4D4" />
<rect x="1" y="303" width="25" height="1" fill="url(#hgrad)" />
<rect x="27" y="324" width="876" height="1" fill="#D4D4D4" />
<rect x="1" y="324" width="25" height="1" fill="url(#hgrad)" />
<rect x="27" y="344" width="876" height="1" fill="#D4D4D4" />
<rect x="1" y="344" width="25" height="1" fill="url(#hgrad)" />
<rect x="27" y="364" width="876" height="1" fill="#D4D4D4" />
<rect x="1" y="364" width="25" height="1" fill="url(#hgrad)" />
<rect x="27" y="384" width="876" height="1" fill="#D4D4D4" />
<rect x="1" y="384" width="25" height="1" fill="url(#hgrad)" />
<rect x="27" y="404" width="876" height="1" fill="#D4D4D4" />
<rect x="1" y="404" width="25" height="1" fill="url(#hgrad)" />
<rect x="27" y="424" width="876" height="1" fill="#D4D4D4" />
<rect x="1" y="424" width="25" height="1" fill="url(#hgrad)" />
<rect x="27" y="444" width="876" height="1" fill="#D4D4D4" />
<rect x="1" y="444" width="25" height="1" fill="url(#hgrad)" />
<rect x="27" y="464" width="876" height="1" fill="#D4D4D4" />
<rect x="1" y="464" width="25" height="1" fill="url(#hgrad)" />
<rect x="27" y="484" width="876" height="1" fill="#D4D4D4" />
<rect x="1" y="484" width="25" height="1" fill="url(#hgrad)" />
<rect x="27" y="504" width="876" height="1" fill="#D4D4D4" />
<rect x="1" y="504" width="25" height="1" fill="url(#hgrad)" />
<rect x="27" y="524" width="876" height="1" fill="#D4D4D4" />
<rect x="1" y="524" width="25" height="1" fill="url(#hgrad)" />
<rect x="27" y="544" width="876" height="1" fill="#D4D4D4" />
<rect x="1" y="544" width="25" height="1" fill="url(#hgrad)" />
<rect x="25" y="303" width="2" height="21" fill="#217346" />
<text x="58.7" y="219" font-size="12" fill="#262626" font-weight="normal" text-anchor="middle" stroke="#262626" stroke-width="0.3" >A</text>
<text x="122.7" y="219" font-size="12" fill="#217346" font-weight="normal" text-anchor="middle" stroke="#217346" stroke-width="0.3" >B</text>
<text x="186.7" y="219" font-size="12" fill="#262626" font-weight="normal" text-anchor="middle" stroke="#262626" stroke-width="0.3" >C</text>
<text x="250.7" y="219" font-size="12" fill="#262626" font-weight="normal" text-anchor="middle" stroke="#262626" stroke-width="0.3" >D</text>
<text x="314.7" y="219" font-size="12" fill="#262626" font-weight="normal" text-anchor="middle" stroke="#262626" stroke-width="0.3" >E</text>
<text x="378.7" y="219" font-size="12" fill="#262626" font-weight="normal" text-anchor="middle" stroke="#262626" stroke-width="0.3" >F</text>
<text x="442.7" y="219" font-size="12" fill="#262626" font-weight="normal" text-anchor="middle" stroke="#262626" stroke-width="0.3" >G</text>
<text x="506.7" y="219" font-size="12" fill="#262626" font-weight="normal" text-anchor="middle" stroke="#262626" stroke-width="0.3" >H</text>
<text x="570.7" y="219" font-size="12" fill="#262626" font-weight="normal" text-anchor="middle" stroke="#262626" stroke-width="0.3" >I</text>
<text x="634.7" y="219" font-size="12" fill="#262626" font-weight="normal" text-anchor="middle" stroke="#262626" stroke-width="0.3" >J</text>
<text x="698.7" y="219" font-size="12" fill="#262626" font-weight="normal" text-anchor="middle" stroke="#262626" stroke-width="0.3" >K</text>
<text x="762.7" y="219" font-size="12" fill="#262626" font-weight="normal" text-anchor="middle" stroke="#262626" stroke-width="0.3" >L</text>
<text x="826.7" y="219" font-size="12" fill="#262626" font-weight="normal" text-anchor="middle" stroke="#262626" stroke-width="0.3" >M</text>
<text x="890.7" y="219" font-size="12" fill="#262626" font-weight="normal" text-anchor="middle" stroke="#262626" stroke-width="0.3" >N</text>
<text x="13.5" y="239" font-size="12" fill="#262626" font-weight="normal" text-anchor="middle" stroke="#262626" stroke-width="0.3" >1</text>
<text x="13.5" y="259" font-size="12" fill="#262626" font-weight="normal" text-anchor="middle" stroke="#262626" stroke-width="0.3" >2</text>
<text x="13.5" y="279" font-size="12" fill="#262626" font-weight="normal" text-anchor="middle" stroke="#262626" stroke-width="0.3" >3</text>
<text x="13.5" y="299" font-size="12" fill="#262626" font-weight="normal" text-anchor="middle" stroke="#262626" stroke-width="0.3" >4</text>
<text x="13.5" y="319" font-size="12" fill="#217346" font-weight="normal" text-anchor="middle" stroke="#217346" stroke-width="0.3" >5</text>
<text x="13.5" y="340" font-size="12" fill="#262626" font-weight="normal" text-anchor="middle" stroke="#262626" stroke-width="0.3" >6</text>
<text x="13.5" y="360" font-size="12" fill="#262626" font-weight="normal" text-anchor="middle" stroke="#262626" stroke-width="0.3" >7</text>
<text x="13.5" y="380" font-size="12" fill="#262626" font-weight="normal" text-anchor="middle" stroke="#262626" stroke-width="0.3" >8</text>
<text x="13.5" y="400" font-size="12" fill="#262626" font-weight="normal" text-anchor="middle" stroke="#262626" stroke-width="0.3" >9</text>
<text x="13.5" y="420" font-size="12" fill="#262626" font-weight="normal" text-anchor="middle" stroke="#262626" stroke-width="0.3" >10</text>
<text x="13.5" y="440" font-size="12" fill="#262626" font-weight="normal" text-anchor="middle" stroke="#262626" stroke-width="0.3" >11</text>
<text x="13.5" y="460" font-size="12" fill="#262626" font-weight="normal" text-anchor="middle" stroke="#262626" stroke-width="0.3" >12</text>
<text x="13.5" y="480" font-size="12" fill="#262626" font-weight="normal" text-anchor="middle" stroke="#262626" stroke-width="0.3" >13</text>
<text x="13.5" y="500" font-size="12" fill="#262626" font-weight="normal" text-anchor="middle" stroke="#262626" stroke-width="0.3" >14</text>
<text x="13.5" y="520" font-size="12" fill="#262626" font-weight="normal" text-anchor="middle" stroke="#262626" stroke-width="0.3" >15</text>
<text x="13.5" y="540" font-size="12" fill="#262626" font-weight="normal" text-anchor="middle" stroke="#262626" stroke-width="0.3" >16</text>
<path d="M23 208 L23 220 L11 220 Z" fill="#B4B4B4"/>
<rect x="0" y="547" width="903" height="1" fill="#ABABAB" />
<rect x="903" y="204" width="21" height="344" fill="#E6E6E6" />
<rect x="902" y="224" width="1" height="323" fill="#ABABAB" />
<rect x="90" y="303" width="65" height="22" fill="none" stroke="#217346" stroke-width="2"/>
<rect x="151" y="321" width="7" height="7" fill="#FFFFFF" />
<rect x="152" y="322" width="5" height="5" fill="#217346" />
<text x="151.8" y="319.5" font-size="13" fill="#262626" font-weight="normal" text-anchor="end" textLength="23.4" lengthAdjust="spacingAndGlyphs" stroke="#262626" stroke-width="0.1" >368</text>
<rect x="85.5" y="298.5" width="79" height="32" rx="2" fill="none" stroke="#FF0000" stroke-width="3"/>
<rect x="304.5" y="164.5" width="100.5" height="35" rx="2" fill="none" stroke="#FF0000" stroke-width="3"/>
<rect x="0" y="548" width="925" height="27" fill="#E6E6E6" />
<rect x="101" y="547" width="107" height="25" fill="#ABABAB" />
<rect x="102" y="547" width="105" height="24" fill="#FFFFFF" />
<rect x="101" y="569" width="107" height="2" fill="#217346" />
<text x="113.6" y="564.4" font-size="12.6" fill="#217346" font-weight="bold" text-anchor="start" textLength="82" lengthAdjust="spacingAndGlyphs" stroke="#217346" stroke-width="0.15" >microexcel.ru</text>
<rect x="0" y="575" width="925" height="1" fill="#C6C6C6" />
<rect x="0" y="576" width="925" height="21" fill="#F3F3F3" />
<text x="9.8" y="588.8" font-size="11" fill="#262626" font-weight="normal" text-anchor="start" textLength="35.2" lengthAdjust="spacingAndGlyphs" stroke="#262626" stroke-width="0.05" >Готово</text>
<text x="876" y="588.8" font-size="11.2" fill="#262626" font-weight="normal" text-anchor="start" textLength="29" lengthAdjust="spacingAndGlyphs" stroke="#262626" stroke-width="0.05" >100 %</text>
<rect x="624" y="576" width="38" height="21" fill="#C8C8C8" />
<path fill="#555" d="M148 178H155.5L151.75 182Z"/>
<rect x="176" y="176" width="2" height="2" fill="#A6A6A6" />
<rect x="176" y="180.5" width="2" height="2" fill="#A6A6A6" />
<rect x="176" y="185" width="2" height="2" fill="#A6A6A6" />
<path fill="none" stroke="#B4B4B4" stroke-width="1.3" d="M205.8 177.3L215.8 186.3 M215.8 177.3L205.8 186.3"/>
<path fill="none" stroke="#B4B4B4" stroke-width="1.8" d="M241.5 181.5L245.5 185.5L253.8 176.5"/>
<path fill="none" stroke="#5A5A5A" stroke-width="1.4" stroke-linecap="round" d="M277.6 186.2Q279.3 186.9 280 184.2L282.1 177Q282.9 174.9 285.6 175.6"/>
<path fill="none" stroke="#5A5A5A" stroke-width="1.1" d="M279.4 178.4H284.4"/>
<path fill="none" stroke="#5A5A5A" stroke-width="1.2" d="M283.6 181.2Q284.8 180.6 285.3 182.2L286.2 184.1Q286.8 184.9 288.4 184.3 M288.4 180.9Q287 181 285.6 182.8L284.3 184.3Q283.5 184.9 282.4 184.4"/>
<path fill="none" stroke="#555" stroke-width="1.6" d="M907.5 178.5L910.7 182L914 178.5"/>
<rect x="906.5" y="206.5" width="14" height="14.5" fill="#FFFFFF" stroke="#ABABAB" stroke-width="1"/>
<path fill="#666" d="M910 215H917.2L913.6 211Z"/>
<rect x="906.5" y="221.5" width="14" height="248" fill="#FFFFFF" stroke="#ABABAB" stroke-width="1"/>
<rect x="907" y="470" width="14" height="63" fill="url(#trk)" />
<rect x="906.5" y="533.5" width="14" height="14" fill="#FFFFFF" stroke="#ABABAB" stroke-width="1"/>
<path fill="#666" d="M910 539H917.2L913.6 543Z"/>
<path fill="#BEBEBE" d="M32 557V564L28 560.5Z M57 557V564L61 560.5Z"/>
<circle cx="248.7" cy="560.5" r="7.2" fill="none" stroke="#666" stroke-width="1.2"/>
<path fill="none" stroke="#666" stroke-width="1.6" d="M244.7 560.5H252.7 M248.7 556.5V564.5"/>
<rect x="555" y="556" width="2" height="2" fill="#A6A6A6" />
<rect x="555" y="560" width="2" height="2" fill="#A6A6A6" />
<rect x="555" y="564" width="2" height="2" fill="#A6A6A6" />
<rect x="572.5" y="554.5" width="14" height="14" fill="#FFFFFF" stroke="#ABABAB" stroke-width="1"/>
<path fill="#666" d="M581.5 558V565L577.5 561.5Z"/>
<rect x="587.5" y="554.5" width="276" height="14" fill="#FFFFFF" stroke="#ABABAB" stroke-width="1"/>
<rect x="864" y="555" width="24" height="14" fill="url(#trk)" />
<rect x="888.5" y="554.5" width="14" height="14" fill="#FFFFFF" stroke="#ABABAB" stroke-width="1"/>
<path fill="#666" d="M893.5 558V565L897.5 561.5Z"/>
<circle cx="70" cy="581.8" r="2.9" fill="#6A6A6A"/>
<path fill="none" stroke="#6A6A6A" stroke-width="1.3" d="M68.6 586V591.3H79.4V582"/>
<rect x="74" y="580.2" width="6.2" height="2.5" fill="#6A6A6A" />
<rect x="73.5" y="585" width="2" height="1.1" fill="#6A6A6A" />
<rect x="76.5" y="585" width="2" height="1.1" fill="#6A6A6A" />
<rect x="70.5" y="587" width="2" height="1.1" fill="#6A6A6A" />
<rect x="73.5" y="587" width="2" height="1.1" fill="#6A6A6A" />
<rect x="76.5" y="587" width="2" height="1.1" fill="#6A6A6A" />
<rect x="70.5" y="589" width="2" height="1.1" fill="#6A6A6A" />
<rect x="73.5" y="589" width="2" height="1.1" fill="#6A6A6A" />
<rect x="76.5" y="589" width="2" height="1.1" fill="#6A6A6A" />
<rect x="636" y="579" width="13" height="13" fill="#DCDCDC"/>
<path fill="none" stroke="#6A6A6A" stroke-width="1.3" d="M636.6 579.6H648.4V591.4H636.6Z M636.6 583.6H648.4 M636.6 587.5H648.4 M640.6 579.6V591.4 M644.5 579.6V591.4"/>
<path fill="none" stroke="#6A6A6A" stroke-width="1.2" d="M674.4 579.6H687.2V591.4H674.4Z M677.8 581.4H684V589.4H677.8Z M679.5 583.8H682.5 M679.5 585.8H682.5 M679.5 587.8H682.5"/>
<path fill="none" stroke="#6A6A6A" stroke-width="1.2" d="M712.6 579.6H725.2V591.4H712.6Z M716.6 579.6V586.4H720.6V579.6 M712.6 586.4H716.6"/>
<rect x="743" y="585" width="6" height="1.6" fill="#555" />
<rect x="753" y="585.6" width="100" height="1" fill="#9A9A9A" />
<rect x="801" y="580" width="5" height="10.6" fill="#6A6A6A" />
<path fill="none" stroke="#555" stroke-width="1.6" d="M856.5 586H863.5 M860 582.5V589.5"/>
<rect x="923" y="65" width="1" height="532" fill="#FAFAFA" />
<rect x="1" y="596" width="923" height="1" fill="#FAFAFA" />
<rect x="1" y="576" width="1" height="21" fill="#FAFAFA" />
<rect x="0" y="65" width="1" height="533" fill="#03733F" />
<rect x="924" y="65" width="1" height="533" fill="#03733F" />
<rect x="0" y="597" width="925" height="1" fill="#03733F" />
</svg></body></html>
